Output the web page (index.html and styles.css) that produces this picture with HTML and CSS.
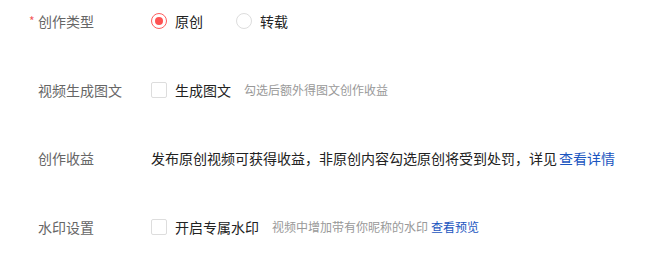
FILE: index.html
```
<!DOCTYPE html>
<html lang="zh">
<head>
<meta charset="utf-8">
<link rel="stylesheet" href="styles.css">
</head>
<body>
<div class="form">
  <div class="row">
    <div class="label"><span class="req">*</span>创作类型</div>
    <div class="control">
      <span class="radio checked"></span><span class="opt">原创</span>
      <span class="radio second"></span><span class="opt">转载</span>
    </div>
  </div>
  <div class="row">
    <div class="label">视频生成图文</div>
    <div class="control">
      <span class="checkbox"></span><span class="opt">生成图文</span>
      <span class="hint">勾选后额外得图文创作收益</span>
    </div>
  </div>
  <div class="row">
    <div class="label">创作收益</div>
    <div class="control">
      <span class="text">发布原创视频可获得收益，非原创内容勾选原创将受到处罚，详见</span><span class="link">查看详情</span>
    </div>
  </div>
  <div class="row">
    <div class="label">水印设置</div>
    <div class="control">
      <span class="checkbox"></span><span class="opt">开启专属水印</span>
      <span class="hint">视频中增加带有你昵称的水印</span><span class="link small">查看预览</span>
    </div>
  </div>
</div>
</body>
</html>
```
FILE: styles.css
```
html, body {
  margin: 0;
  background: #fff;
}
body {
  font-family: "Noto Sans CJK SC", "Noto Sans", sans-serif;
  width: 660px;
  height: 260px;
  overflow: hidden;
}
.form {
  display: flex;
  flex-direction: column;
  gap: 46.5px;
  padding-top: 10px;
}
.row {
  display: flex;
  align-items: center;
  height: 22px;
}
.label {
  width: 151px;
  box-sizing: border-box;
  padding-left: 38px;
  position: relative;
  font-size: 14px;
  color: #666;
  line-height: 22px;
}
.req {
  position: absolute;
  left: 29px;
  top: 0;
  color: #f35b5b;
  font-size: 12px;
}
.control {
  display: flex;
  align-items: center;
  font-size: 14px;
  color: #222;
  line-height: 22px;
}
.radio {
  width: 16px;
  height: 16px;
  box-sizing: border-box;
  border: 1px solid #ddd;
  border-radius: 50%;
  margin-right: 8px;
  display: flex;
  align-items: center;
  justify-content: center;
}
.radio.checked {
  border-color: #fe5d5d;
}
.radio.checked::after {
  content: "";
  width: 8px;
  height: 8px;
  border-radius: 50%;
  background: #fe5353;
}
.radio.second {
  margin-left: 33px;
}
.checkbox {
  width: 16px;
  height: 16px;
  box-sizing: border-box;
  border: 1px solid #ddd;
  border-radius: 2px;
  margin-right: 8px;
}
.hint {
  font-size: 12px;
  color: #999;
  margin-left: 13px;
}
.link {
  color: #1a55c0;
  margin-left: 2px;
}
.link.small {
  font-size: 12px;
  margin-left: 3px;
}
```
